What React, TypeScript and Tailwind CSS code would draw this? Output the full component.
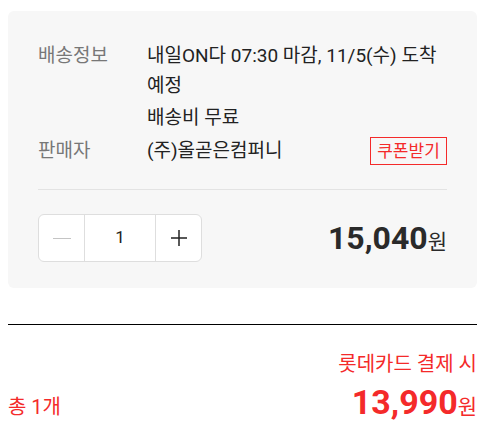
import React from "react";

export default function App() {
  const font = { fontFamily: 'Roboto, "Noto Sans CJK KR", sans-serif' };
  return (
    <div className="w-[489px] h-[438px] bg-white overflow-hidden" style={font}>
      <div className="ml-2 w-[469px] mt-[11px] rounded-md bg-[#f7f7f7] px-[30px] pt-[30px] pb-[26px]">
        <div className="flex text-[19px] leading-[30px]">
          <div className="w-[109px] shrink-0 text-[#777]">배송정보</div>
          <div className="text-[#222]">
            <div>내일ON다 07:30 마감, 11/5(수) 도착 예정</div>
            <div className="mt-[2px]">배송비 무료</div>
          </div>
        </div>
        <div className="mt-[3px] flex items-center text-[19px] leading-[30px]">
          <div className="w-[109px] shrink-0 text-[#777]">판매자</div>
          <div className="flex-1 text-[#222]">(주)올곧은컴퍼니</div>
          <div className="h-[28px] w-[77px] border border-[#f42a2a] text-[17px] leading-[26px] text-center text-[#f42a2a]">쿠폰받기</div>
        </div>
        <div className="mt-[23px] h-px bg-[#e3e3e3]" />
        <div className="mt-[24px] flex items-center justify-between">
          <div className="flex h-[48px] w-[164px] rounded-md border border-[#dedede] bg-white overflow-hidden">
            <div className="flex w-[45px] items-center justify-center">
              <div className="h-px w-[18px] bg-[#c4c4c4]" />
            </div>
            <div className="flex w-[72px] items-center justify-center border-x border-[#dedede] text-[17px] text-[#222]">1</div>
            <div className="flex flex-1 items-center justify-center">
              <svg width="18" height="18" viewBox="0 0 18 18">
                <path d="M9 1v16M1 9h16" stroke="#222" strokeWidth="1.5" />
              </svg>
            </div>
          </div>
          <div className="flex items-baseline text-[#2a2a2a]">
            <span className="text-[32px] font-bold leading-none">15,040</span>
            <span className="text-[21px] leading-none">원</span>
          </div>
        </div>
      </div>
      <div className="ml-2 w-[469px] mt-[36px] h-px bg-black" />
      <div className="ml-2 w-[469px] mt-[26px] text-[#f42a2a]">
        <div className="text-right text-[20px] leading-[26px]">롯데카드 결제 시</div>
        <div className="mt-[8px] flex items-baseline justify-between">
          <span className="text-[20px]">총 1개</span>
          <span className="flex items-baseline">
            <span className="text-[34px] font-bold leading-none">13,990</span>
            <span className="text-[21px] leading-none">원</span>
          </span>
        </div>
      </div>
    </div>
  );
}
